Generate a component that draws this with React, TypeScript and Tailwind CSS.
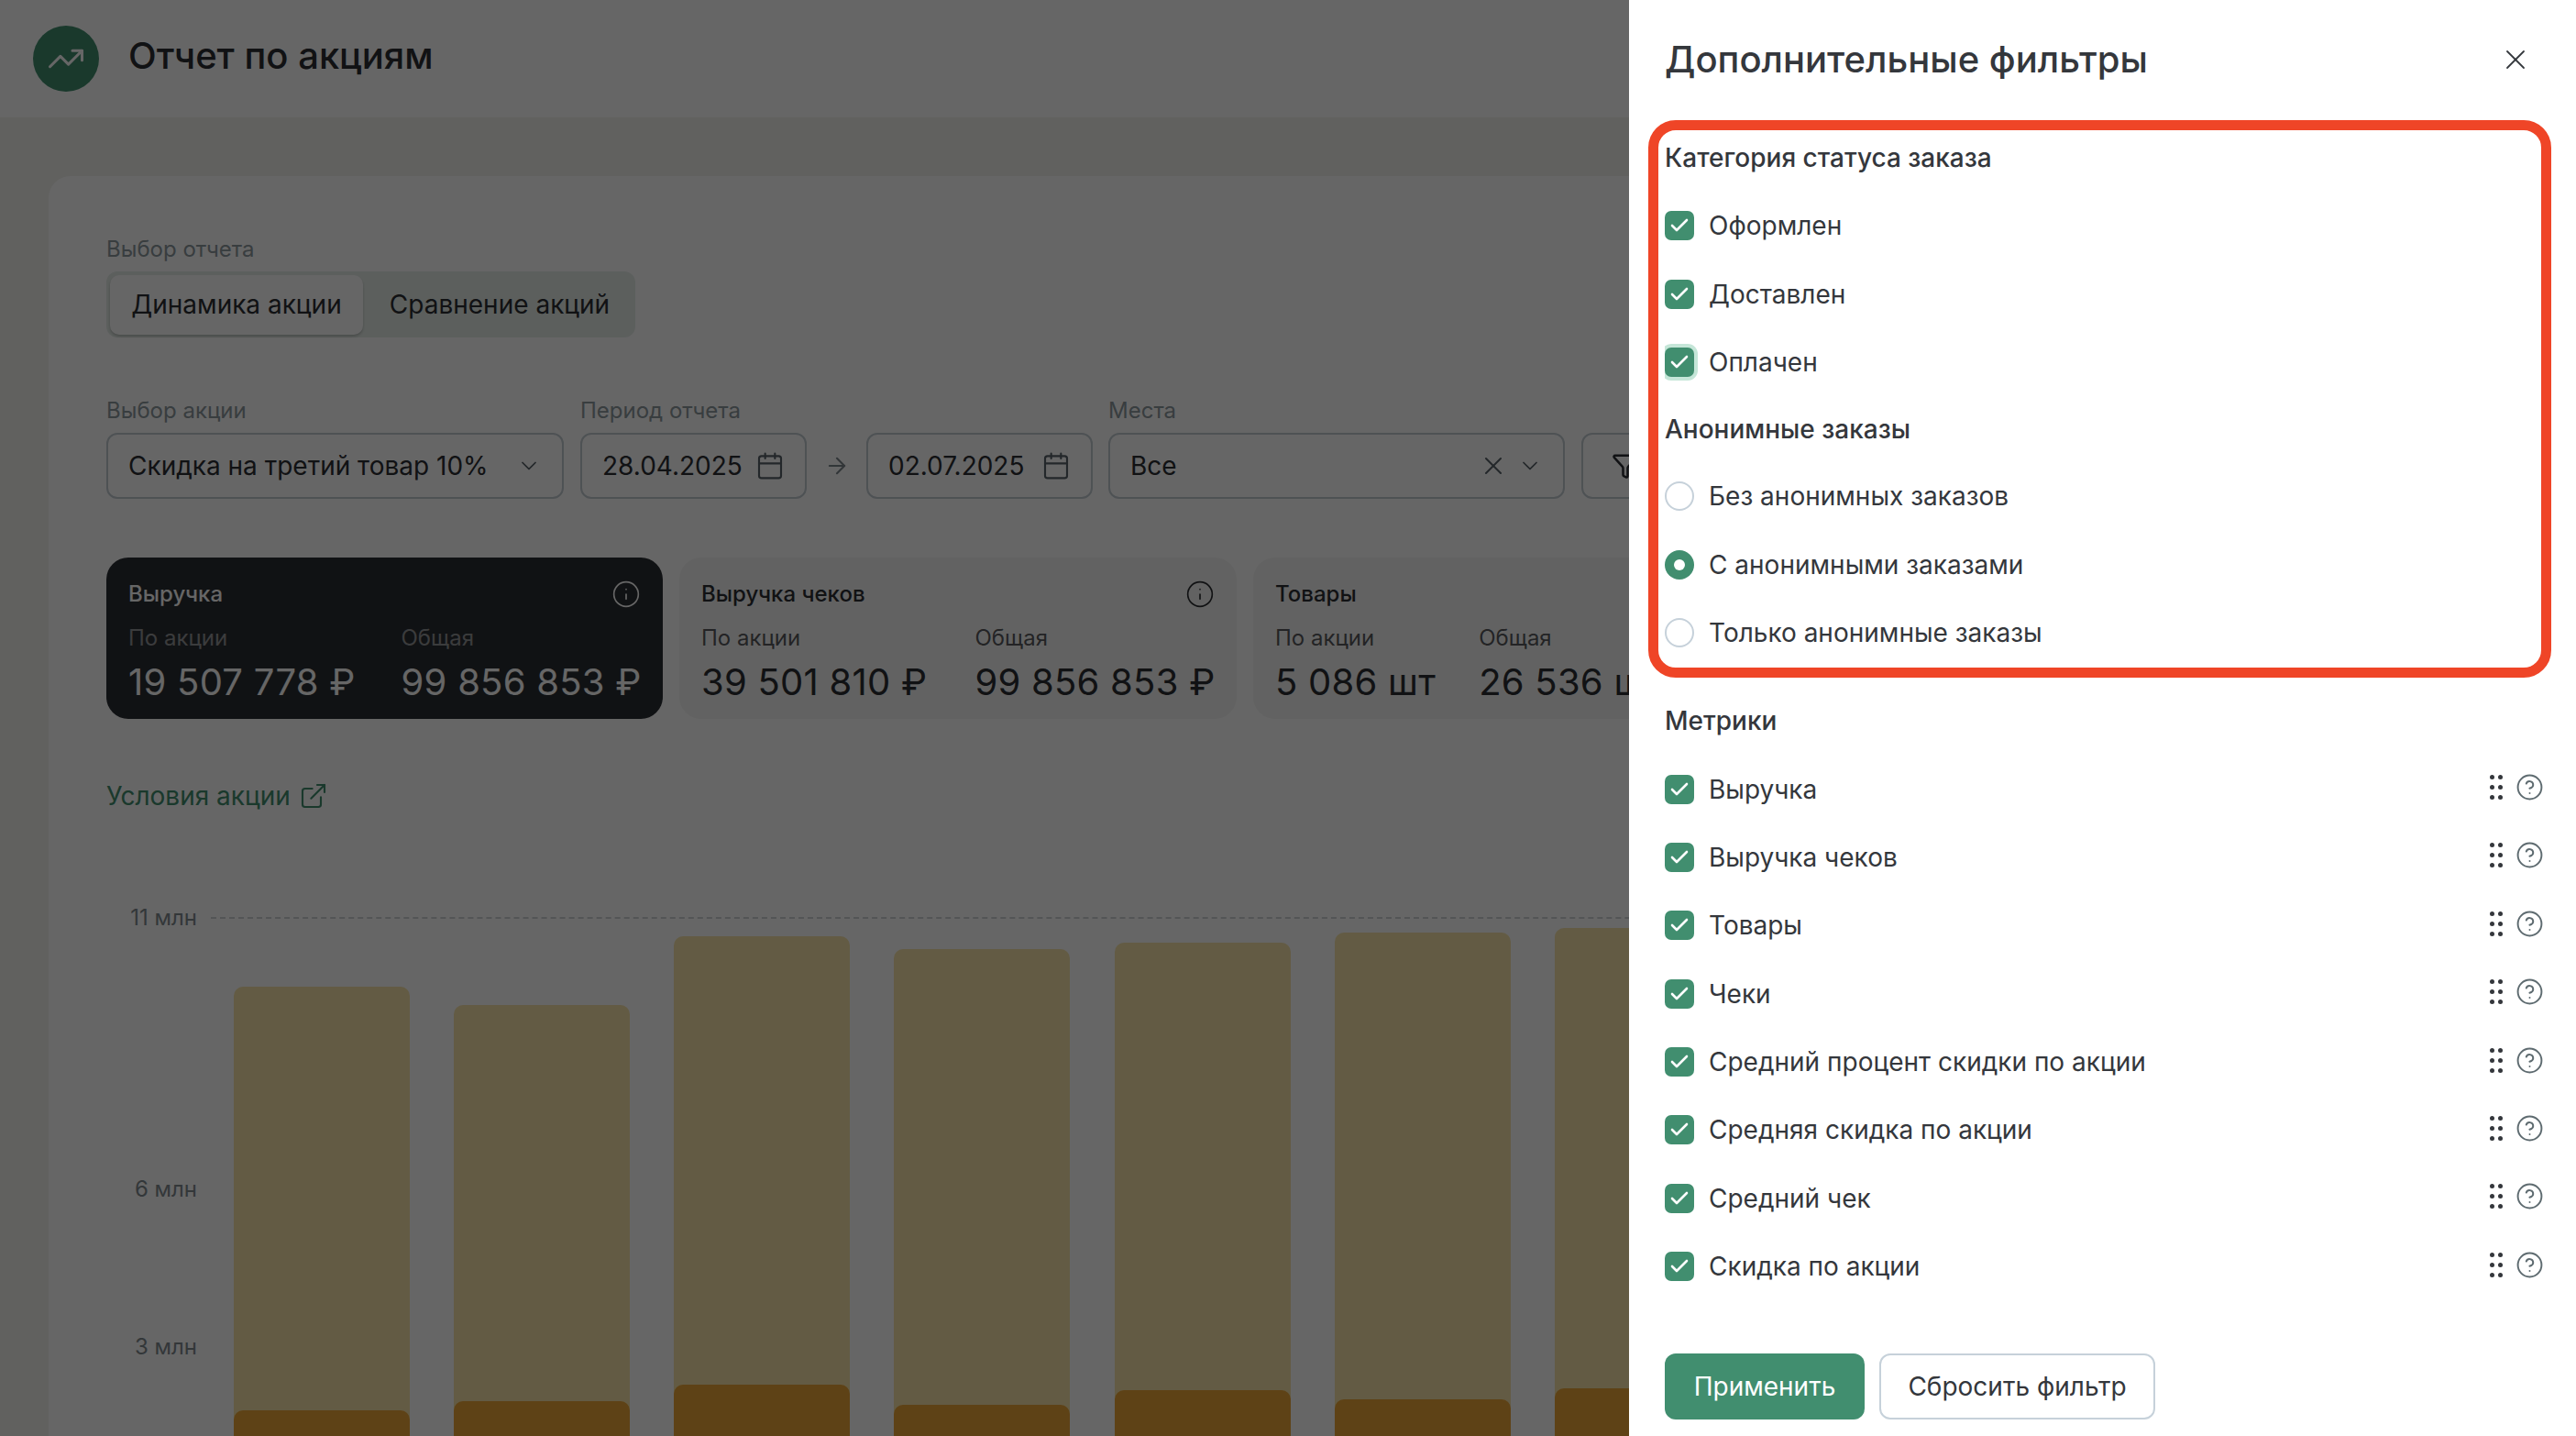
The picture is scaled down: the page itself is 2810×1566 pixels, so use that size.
import { ArrowRight, Calendar, Check, ChevronDown, CircleHelp, ExternalLink, Funnel, Info, TrendingUp, X } from 'lucide-react'

const bars = [
  { top: 1076, inner: 1538 },
  { top: 1096, inner: 1528 },
  { top: 1021, inner: 1510 },
  { top: 1035, inner: 1532 },
  { top: 1028, inner: 1516 },
  { top: 1017, inner: 1526 },
  { top: 1012, inner: 1514 },
]

const statuses = ['Оформлен', 'Доставлен', 'Оплачен']
const anonymous = ['Без анонимных заказов', 'С анонимными заказами', 'Только анонимные заказы']
const metrics = [
  'Выручка',
  'Выручка чеков',
  'Товары',
  'Чеки',
  'Средний процент скидки по акции',
  'Средняя скидка по акции',
  'Средний чек',
  'Скидка по акции',
]

function Field({ label, className, children }: { label: string; className: string; children: React.ReactNode }) {
  return (
    <div className={`flex shrink-0 flex-col gap-[10px] ${className}`}>
      <span className="text-[24px] leading-[28px] text-[#8d989e]">{label}</span>
      {children}
    </div>
  )
}

function Box({ className, children }: { className: string; children: React.ReactNode }) {
  return (
    <div className={`flex h-[72px] items-center rounded-[12px] border-2 border-[#c3ccd3] bg-white px-[22px] text-[#2b2d32] ${className}`}>
      {children}
    </div>
  )
}

function Stat({ dark, title, left, right, leftValue, rightValue, className, gapClass }: {
  dark?: boolean
  title: string
  left: string
  right: string
  leftValue: string
  rightValue: string
  className: string
  gapClass: string
}) {
  return (
    <div className={`h-[176px] shrink-0 rounded-[24px] px-[24px] pt-[26px] ${dark ? 'bg-[#2a2d32] text-white' : 'bg-[#f5f6f4] text-[#2b2d32]'} ${className}`}>
      <div className="flex h-[28px] items-center justify-between">
        <span className="text-[24px] font-medium">{title}</span>
        <Info className={`h-[32px] w-[32px] ${dark ? 'text-white' : 'text-[#2b2d32]'}`} strokeWidth={1.25} />
      </div>
      <div className={`mt-[20px] flex ${gapClass}`}>
        <div className="flex shrink-0 flex-col">
          <span className={`text-[24px] leading-[28px] ${dark ? 'text-white/50' : 'text-[#2b2d32]/80'}`}>{left}</span>
          <span className="mt-[10px] text-[40px] leading-[48px] tracking-[0.25px] whitespace-nowrap">{leftValue}</span>
        </div>
        <div className="flex shrink-0 flex-col">
          <span className={`text-[24px] leading-[28px] ${dark ? 'text-white/50' : 'text-[#2b2d32]/80'}`}>{right}</span>
          <span className="mt-[10px] text-[40px] leading-[48px] tracking-[0.25px] whitespace-nowrap">{rightValue}</span>
        </div>
      </div>
    </div>
  )
}

function CheckMark({ focused }: { focused?: boolean }) {
  return (
    <span className={`flex h-[32px] w-[32px] shrink-0 items-center justify-center rounded-[7px] bg-[#418e6f] ${focused ? 'ring-4 ring-[#c5e6d8] [clip-path:inset(-4px_-4px_-4px_0)]' : ''}`}>
      <Check className="h-[24px] w-[24px] text-white" strokeWidth={2.6} />
    </span>
  )
}

function Radio({ checked }: { checked: boolean }) {
  return checked ? (
    <span className="flex h-[32px] w-[32px] shrink-0 items-center justify-center rounded-full bg-[#418e6f]">
      <span className="h-[12px] w-[12px] rounded-full bg-white" />
    </span>
  ) : (
    <span className="h-[32px] w-[32px] shrink-0 rounded-full border-2 border-[#c6d1da] bg-white" />
  )
}

function DragDots() {
  return (
    <svg width="14" height="27" viewBox="0 0 14 27" className="text-[#34373c]">
      {[2.5, 13.5, 24.5].map((y) => (
        <g key={y} fill="currentColor">
          <circle cx="2.5" cy={y} r="2.5" />
          <circle cx="11.5" cy={y} r="2.5" />
        </g>
      ))}
    </svg>
  )
}

function Row({ control, label, children }: { control: React.ReactNode; label: string; children?: React.ReactNode }) {
  return (
    <div className="flex h-[74.4px] items-center gap-[16px] text-[28px] text-[#34373c]">
      {control}
      <span>{label}</span>
      {children}
    </div>
  )
}

export default function App() {
  return (
    <div className="relative h-[1566px] w-[2810px] overflow-hidden bg-[#f2f2ee] font-['Inter',sans-serif]">
      {/* страница под затемнением */}
      <header className="flex h-[128px] items-center gap-[32px] bg-white pl-[36px]">
        <div className="flex h-[72px] w-[72px] items-center justify-center rounded-full bg-[#418e6f]">
          <TrendingUp className="h-[42px] w-[42px] text-white" strokeWidth={1.75} />
        </div>
        <h1 className="mb-[6px] text-[40px] font-medium text-[#2b2d32]">Отчет по акциям</h1>
      </header>

      <main className="ml-[53px] mt-[64px] h-[1500px] rounded-tl-[24px] bg-white pl-[63px] pt-[66px]">
        <div className="flex flex-col gap-[10px]">
          <span className="text-[24px] leading-[28px] text-[#8d989e]">Выбор отчета</span>
          <div className="flex h-[72px] w-[577px] items-center rounded-[12px] bg-[#e6eee9] px-[4px] text-[28px] text-[#2b2d32]">
            <div className="flex h-[65px] w-[276px] items-center justify-center rounded-[10px] bg-white shadow-[0_2px_3px_rgba(0,0,0,0.2)]">Динамика акции</div>
            <div className="flex h-[65px] flex-1 items-center justify-center pl-[5px]">Сравнение акций</div>
          </div>
        </div>

        <div className="mt-[66px] flex items-end text-[28px]">
          <Field label="Выбор акции" className="w-[499px]">
            <Box className="justify-between">
              <span>Скидка на третий товар 10%</span>
              <ChevronDown className="h-[28px] w-[28px] text-[#59636a]" strokeWidth={1.5} />
            </Box>
          </Field>
          <Field label="Период отчета" className="ml-[18px] w-[247px]">
            <Box className="justify-between">
              <span>28.04.2025</span>
              <Calendar className="h-[32px] w-[32px] text-[#59636a]" strokeWidth={1.6} />
            </Box>
          </Field>
          <div className="flex h-[72px] w-[65px] shrink-0 items-center justify-center">
            <ArrowRight className="h-[28px] w-[28px] text-[#7d878d]" strokeWidth={1.75} />
          </div>
          <Box className="w-[247px] shrink-0 justify-between">
            <span>02.07.2025</span>
            <Calendar className="h-[32px] w-[32px] text-[#59636a]" strokeWidth={1.6} />
          </Box>
          <Field label="Места" className="ml-[17px] w-[498px]">
            <Box className="justify-between">
              <span>Все</span>
              <div className="flex items-center gap-[10px]">
                <X className="h-[32px] w-[32px] text-[#59636a]" strokeWidth={1.5} />
                <ChevronDown className="h-[28px] w-[28px] text-[#59636a]" strokeWidth={1.5} />
              </div>
            </Box>
          </Field>
          <Box className="ml-[18px] w-[96px] shrink-0 justify-center">
            <Funnel className="h-[30px] w-[30px] shrink-0 text-[#2b2d32]" strokeWidth={2} />
          </Box>
        </div>

        <div className="mt-[64px] flex gap-[18px]">
          <Stat dark title="Выручка" left="По акции" right="Общая" leftValue="19 507 778 ₽" rightValue="99 856 853 ₽" className="w-[607px]" gapClass="gap-[50px]" />
          <Stat title="Выручка чеков" left="По акции" right="Общая" leftValue="39 501 810 ₽" rightValue="99 856 853 ₽" className="w-[608px]" gapClass="gap-[52px]" />
          <Stat title="Товары" left="По акции" right="Общая" leftValue="5 086 шт" rightValue="26 536 шт" className="w-[608px]" gapClass="gap-[47px]" />
        </div>

        <a className="mt-[66px] flex items-center gap-[9px] text-[28px] leading-[36px] text-[#418e6f]">
          Условия акции
          <ExternalLink className="h-[32px] w-[32px]" strokeWidth={1.6} />
        </a>

        {/* график */}
        <div className="relative mt-[114px] h-[566px]">
          <div className="absolute left-[114px] right-0 top-0 border-t-2 border-dashed border-[#d0d4d6]" />
          <span className="absolute top-[-13px] w-[99px] text-right text-[24px] leading-[28px] text-[#7f8a90]">11 млн</span>
          <span className="absolute top-[283px] w-[99px] text-right text-[24px] leading-[28px] text-[#7f8a90]">6 млн</span>
          <span className="absolute top-[455px] w-[99px] text-right text-[24px] leading-[28px] text-[#7f8a90]">3 млн</span>
          <div className="flex h-full items-end gap-[48.3px] pl-[138.6px]">
            {bars.map((bar) => (
              <div key={bar.top} className="relative w-[192px] shrink-0 rounded-t-[10px] bg-[#f8e4aa]" style={{ height: 1566 - bar.top }}>
                <div className="absolute inset-x-0 bottom-0 rounded-t-[10px] bg-[#eba537]" style={{ height: 1566 - bar.inner }} />
              </div>
            ))}
          </div>
        </div>
      </main>

      <div className="absolute inset-0 bg-black/60" />

      {/* панель фильтров */}
      <aside className="absolute bottom-0 right-0 top-0 w-[1033px] bg-white pl-[39px] pr-[40px]">
        <div className="flex h-[130px] items-center justify-between">
          <h2 className="text-[40px] font-medium text-[#34373c]">Дополнительные фильтры</h2>
          <X className="mr-[8px] h-[36px] w-[36px] text-[#34373c]" strokeWidth={1.2} />
        </div>
        <h3 className="mt-[5px] flex h-[74px] items-center text-[28px] font-medium text-[#34373c]">Категория статуса заказа</h3>
        {statuses.map((s) => (
          <Row key={s} label={s} control={<CheckMark focused={s === 'Оплачен'} />} />
        ))}
        <h3 className="flex h-[72px] items-center text-[28px] font-medium text-[#34373c]">Анонимные заказы</h3>
        {anonymous.map((s, i) => (
          <Row key={s} label={s} control={<Radio checked={i === 1} />} />
        ))}
        <h3 className="mt-[22px] flex h-[74px] items-center text-[28px] font-medium text-[#34373c]">Метрики</h3>
        {metrics.map((m) => (
          <Row key={m} label={m} control={<CheckMark />}>
            <div className="ml-auto mr-[-5px] flex items-center gap-[14px] pb-[4px]">
              <DragDots />
              <CircleHelp className="h-[31px] w-[31px] text-[#5e6b70]" strokeWidth={1.5} />
            </div>
          </Row>
        ))}
        <div className="mt-[58px] flex gap-[16px] text-[28px]">
          <button className="h-[72px] w-[218px] rounded-[12px] bg-[#418e6f] text-white">Применить</button>
          <button className="h-[72px] w-[301px] rounded-[12px] border-2 border-[#c6d1da] bg-white text-[#34373c]">Сбросить фильтр</button>
        </div>
      </aside>

      {/* красная рамка поверх скриншота */}
      <div className="absolute left-[1798px] top-[131px] h-[608px] w-[985px] rounded-[30px] border-[11px] border-[#ef4527]" />
    </div>
  )
}
